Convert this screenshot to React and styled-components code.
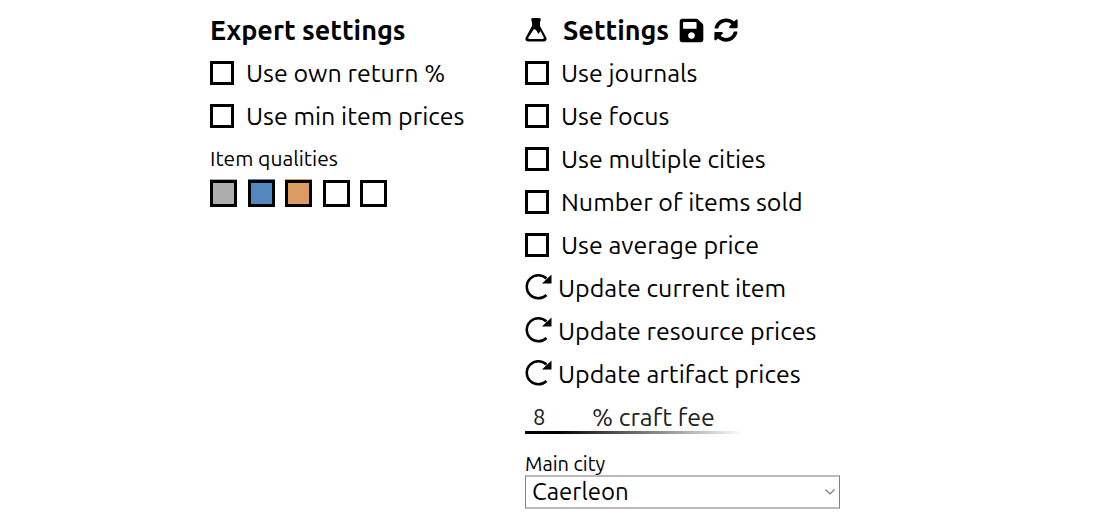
import React from 'react';
import styled, { createGlobalStyle } from 'styled-components';
import { FaSave, FaSyncAlt } from 'react-icons/fa';

const GlobalStyle = createGlobalStyle`
  *, *::before, *::after { box-sizing: border-box; }
  body {
    margin: 0;
    background: #fff;
    color: #000;
    font-family: Ubuntu, "Noto Sans", sans-serif;
    font-size: 25px;
    line-height: 24px;
  }
`;

const Page = styled.main`
  display: grid;
  grid-template-columns: repeat(2, minmax(0, 315px));
  max-width: 687px;
  margin: 0 auto;
  padding: 9px 0;
`;

const Panel = styled.section`
  display: flex;
  flex-direction: column;
  align-items: stretch;
`;

const Header = styled.header`
  display: flex;
  align-items: center;
  gap: 9px;
  padding: 9px 0 10px;
  height: 43px;
`;

const Title = styled.h2`
  margin: 0;
  font-size: 27px;
  font-weight: 700;
  white-space: nowrap;
`;

const FlaskIcon = styled.svg`
  width: 22px;
  height: 24px;
  margin-right: 7px;
`;

const IconButton = styled.button`
  display: flex;
  padding: 0;
  border: 0;
  background: none;
  color: inherit;
  cursor: pointer;
`;

const Option = styled.label`
  display: flex;
  align-items: center;
  gap: 12px;
  padding: 9px 0 10px;
  white-space: nowrap;
  cursor: pointer;
`;

const Box = styled.input.attrs({ type: 'checkbox' })`
  appearance: none;
  flex: none;
  width: 24px;
  height: 24px;
  margin: 0;
  border: 3px solid #000;
  background: #fff;
  cursor: pointer;
  &:checked { background: #000; background-clip: content-box; padding: 3px; }
`;

const Qualities = styled.fieldset`
  margin: 9px 0 0;
  padding: 0;
  border: 0;
`;

const SmallText = styled.span`
  display: block;
  font-size: ${(p) => (p.$large ? 21 : 20)}px;
  line-height: 22px;
`;

const Swatches = styled.div`
  display: flex;
  justify-content: space-between;
  width: 177px;
  margin-top: 11px;
`;

const Swatch = styled.input.attrs({ type: 'checkbox' })`
  appearance: none;
  width: 27px;
  height: 27px;
  margin: 0;
  border: 3px solid #000;
  background: #fff;
  cursor: pointer;
  &:checked {
    background: ${(p) => p.$color};
    box-shadow: 0 -1px 0 ${(p) => p.$color};
  }
`;

const UpdateButton = styled.button`
  display: flex;
  align-items: center;
  gap: 6px;
  padding: 9px 0 10px;
  border: 0;
  background: none;
  color: inherit;
  font: inherit;
  white-space: nowrap;
  cursor: pointer;
`;

const ReloadIcon = styled.svg`
  width: 27px;
  height: 28px;
  margin: -3px 0 -1px;
`;

const Fee = styled.label`
  display: flex;
  align-items: center;
  width: 218px;
  padding: 9px 0 2px;
  border-bottom: 3px solid;
  border-image: linear-gradient(to right, #000 15%, transparent) 1;
  color: #222;
  white-space: nowrap;
`;

const FeeInput = styled.input`
  width: 67px;
  height: 24px;
  padding: 0 0 0 8px;
  border: 0;
  background: none;
  color: inherit;
  font: inherit;
  font-size: 22px;
`;

const City = styled.label`
  display: block;
  margin-top: 19px;
`;

const SelectWrap = styled.span`
  display: grid;
  align-items: center;
  > * { grid-area: 1 / 1; }
`;

const Select = styled.select`
  appearance: none;
  width: 100%;
  height: 34px;
  padding: 0 24px 0 6px;
  border: solid;
  border-width: 2px 1px;
  border-color: #bbb #808080;
  border-radius: 0;
  background: #fff;
  color: inherit;
  font: inherit;
  font-size: 24px;
`;

const Chevron = styled.svg`
  justify-self: end;
  width: 10px;
  height: 10px;
  margin-right: 5px;
  pointer-events: none;
`;

const expertOptions = ['Use own return %', 'Use min item prices'];
const options = ['Use journals', 'Use focus', 'Use multiple cities', 'Number of items sold', 'Use average price'];
const updates = ['Update current item', 'Update resource prices', 'Update artifact prices'];
const qualities = [
  { name: 'Normal', color: '#adadad', on: true },
  { name: 'Good', color: '#5587bf', on: true },
  { name: 'Outstanding', color: '#db9b62', on: true },
  { name: 'Excellent', color: '#d8d8d8', on: false },
  { name: 'Masterpiece', color: '#e8c14c', on: false },
];

const CheckOption = ({ text }) => (
  <Option>
    <Box />
    {text}
  </Option>
);

export default function App() {
  return (
    <>
      <GlobalStyle />
      <Page>
        <Panel>
          <Header>
            <Title>Expert settings</Title>
          </Header>
          {expertOptions.map((t) => <CheckOption key={t} text={t} />)}
          <Qualities aria-labelledby="qualities">
            <SmallText id="qualities" $large>Item qualities</SmallText>
            <Swatches>
              {qualities.map((q) => (
                <Swatch key={q.name} aria-label={q.name} $color={q.color} defaultChecked={q.on} />
              ))}
            </Swatches>
          </Qualities>
        </Panel>
        <Panel>
          <Header>
            <FlaskIcon viewBox="0 0 22 24" aria-hidden="true">
              <path d="M7.500 0h7c1.500 0 1.500 2.500 0.500 4v4l6 11c1.500 2.500 0 4.500-2 4.500H3c-2 0-3.500-2-2-4.500L7 8V4C6 2.500 6 0 7.500 0z" />
              <path d="M9 11l2 1 2.500 4 2-3 3.500 7-1 1H4l-1-1z" fill="#fff" />
            </FlaskIcon>
            <Title>Settings</Title>
            <IconButton type="button" aria-label="Save settings"><FaSave size={27} /></IconButton>
            <IconButton type="button" aria-label="Reset settings"><FaSyncAlt size={24} /></IconButton>
          </Header>
          {options.map((t) => <CheckOption key={t} text={t} />)}
          {updates.map((t) => (
            <UpdateButton key={t} type="button">
              <ReloadIcon viewBox="0 0 27 28" aria-hidden="true">
                <path d="M21.500 22A11.600 11.600 0 1 1 21.500 5.500" fill="none" stroke="#000" strokeWidth="2.500" />
                <path d="M26.500 1.500V10.500H17z" />
              </ReloadIcon>
              {t}
            </UpdateButton>
          ))}
          <Fee>
            <FeeInput defaultValue="8" inputMode="numeric" />
            % craft fee
          </Fee>
          <City>
            <SmallText>Main city</SmallText>
            <SelectWrap>
              <Select defaultValue="Caerleon">
                <option>Caerleon</option>
              </Select>
              <Chevron viewBox="0 0 10 10" aria-hidden="true">
                <path d="M0.500 2.500L5 7l4.500-4.500" fill="none" stroke="#777" strokeWidth="1.200" />
              </Chevron>
            </SelectWrap>
          </City>
        </Panel>
      </Page>
    </>
  );
}
